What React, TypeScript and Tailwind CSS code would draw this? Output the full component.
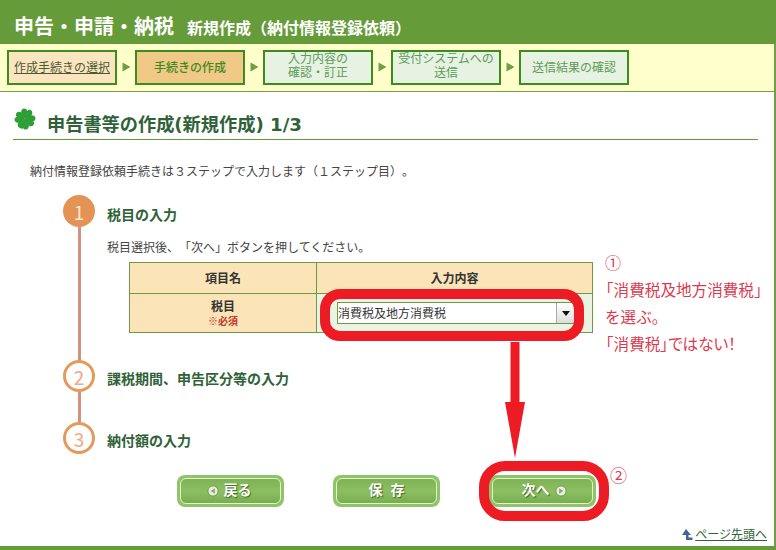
import React from "react";

const font = { fontFamily: '"Noto Sans CJK JP", "Noto Sans", sans-serif' };
const heart = "M11 11C8 8.500 4.500 6.500 5.500 3.200 6.300 0.500 10 0 11 2.800 12 0 15.700 0.500 16.500 3.200 17.500 6.500 14 8.500 11 11Z";

function Clover() {
  return (
    <svg width="22" height="22" viewBox="0 0 22 22" className="shrink-0">
      <g fill="#2e9e36">
        <path d={heart} transform="rotate(15 11 11)" />
        <path d={heart} transform="rotate(105 11 11)" />
        <path d={heart} transform="rotate(195 11 11)" />
        <path d={heart} transform="rotate(285 11 11)" />
        <path d="M10.500 11 Q9.500 16 7 20.500 L8.500 21 Q11 16.500 12 11Z" />
      </g>
    </svg>
  );
}

function StepBox({ children, kind, two }: { children: React.ReactNode; kind: "done" | "active" | "todo"; two?: boolean }) {
  const cls =
    kind === "done"
      ? "bg-[#fbe5c0] text-[#4a5a30] underline"
      : kind === "active"
      ? "bg-[#f0c987] text-[#3f8a20] font-medium"
      : "bg-[#e6f3e2] text-[#5f9a58]";
  return (
    <div className={`w-[110px] h-[35px] border-2 border-[#3d8c1e] flex items-center justify-center text-center text-[12px] leading-[14px] ${two ? "pb-[4px]" : ""} ${cls}`}>
      <span>{children}</span>
    </div>
  );
}

function Sep() {
  return (
    <div className="w-[18px] flex justify-center">
      <svg width="9" height="10" viewBox="0 0 9 10"><path d="M0.500 0.500 8.500 5 0.500 9.500Z" fill="#6f9f3e" /></svg>
    </div>
  );
}

function Circle({ n, filled }: { n: number; filled?: boolean }) {
  return (
    <div
      className={`w-[32px] h-[32px] rounded-full flex items-center justify-center text-[19px] leading-none ${
        filled ? "bg-[#e39455] text-[#fbe7d3]" : "bg-white border-[3px] border-[#e39a5c] text-[#f0a888]"
      }`}
    >
      {n}
    </div>
  );
}

function Btn({ children, shift }: { children: React.ReactNode; shift?: string }) {
  return (
    <div className="w-[107px] h-[32px] rounded-[8px] bg-[#8fc46a] p-[3px]">
      <div className={`w-full h-full rounded-[6px] border border-[#e4f2c9] bg-gradient-to-b from-[#7fb255] via-[#8cbf62] to-[#78ae50] flex items-center justify-center gap-[5px] pb-[3px] text-white font-bold text-[14px] [text-shadow:1px_1px_1px_#3f6a25] ${shift ?? ""}`}>
        {children}
      </div>
    </div>
  );
}

function RoundIcon({ dir }: { dir: "l" | "r" }) {
  return (
    <svg width="12" height="12" viewBox="0 0 13 13" className="mt-[2px]">
      <circle cx="6.500" cy="6.500" r="5.500" fill="#e8f0dc" stroke="#6d9a50" strokeWidth="1" />
      <path d={dir === "l" ? "M8.500 3.500 4 6.500 8.500 9.500Z" : "M4.500 3.500 9 6.500 4.500 9.500Z"} fill="#86a872" />
    </svg>
  );
}

export default function App() {
  return (
    <div style={font} className="relative w-[776px] h-[550px] overflow-hidden bg-white flex flex-col text-[#444] [text-spacing-trim:space-all]">
      <header className="h-[44px] bg-[#659b38] shrink-0 flex items-end pl-[14px] pb-[5px] text-white font-bold gap-[13px]">
        <span className="text-[20px] leading-[26px]">申告・申請・納税</span>
        <span className="text-[16px] leading-[24px]">新規作成（納付情報登録依頼）</span>
      </header>

      <nav className="h-[48px] shrink-0 bg-[#ffffcc] border-b border-[#6fa044] border-r-2 border-r-[#6fa044] flex items-center pl-[7px] pb-[1px]">
        <StepBox kind="done">作成手続きの選択</StepBox>
        <Sep />
        <StepBox kind="active">手続きの作成</StepBox>
        <Sep />
        <StepBox kind="todo" two>入力内容の<br />確認・訂正</StepBox>
        <Sep />
        <StepBox kind="todo" two>受付システムへの<br />送信</StepBox>
        <Sep />
        <StepBox kind="todo">送信結果の確認</StepBox>
      </nav>

      <main className="flex-1 border-r-2 border-[#6fa044] flex flex-col pl-[13px] pr-[16px] relative">
        <div className="h-[48px] border-b border-[#5f9a35] flex items-end gap-[11px] pb-[4px] text-[#2f6238]">
          <div className="ml-[1px] mb-[5px]"><Clover /></div>
          <h1 style={{ fontFamily: '"DejaVu Sans", "Noto Sans CJK JP", sans-serif' }} className="text-[18.200px] font-bold leading-[20px]">申告書等の作成(新規作成) 1/3</h1>
        </div>

        <p className="mt-[22px] ml-[17px] text-[12px] leading-[18px]">納付情報登録依頼手続きは３ステップで入力します（１ステップ目）。</p>

        <div className="ml-[50px] mt-[15px] flex">
          <div className="w-[32px] flex flex-col items-center shrink-0">
            <Circle n={1} filled />
            <div className="w-[3px] h-[133px] bg-[#d59080]" />
            <Circle n={2} />
            <div className="w-[3px] h-[30px] bg-[#d59080]" />
            <Circle n={3} />
          </div>
          <div className="ml-[12px] flex-1">
            <h2 className="h-[32px] pt-[6px] flex items-center text-[14px] font-bold text-[#2f6238]">税目の入力</h2>
            <p className="mt-[11px] text-[12px] leading-[18px]">税目選択後、「次へ」ボタンを押してください。</p>
            <table className="mt-[6px] ml-[22px] w-[464px] h-[71px] border-collapse text-[#333] text-[12px]">
              <tbody>
                <tr className="h-[31px]">
                  <th className="w-[187px] border border-[#6f9a45] bg-[#fbe5b8] font-bold">項目名</th>
                  <th className="border border-[#6f9a45] bg-[#fbe5b8] font-bold">入力内容</th>
                </tr>
                <tr>
                  <th className="border border-[#6f9a45] bg-[#fbe5b8] font-bold leading-[15px]">
                    <div>税目</div>
                    <div className="text-[10px] text-[#c0392b] leading-[15px]">※必須</div>
                  </th>
                  <td className="border border-[#6f9a45] bg-[#e9f4e2] pl-[20px]">
                    <div className="w-[238px] h-[22px] bg-white border border-[#6f9a45] flex items-center justify-between">
                      <span className="text-[12px] leading-none text-[#333]">消費税及地方消費税</span>
                      <span className="w-[18px] h-full border-l border-[#aaa] bg-gradient-to-b from-[#fff] to-[#ddd] flex items-center justify-center">
                        <svg width="8" height="5" viewBox="0 0 8 5"><path d="M0 0H8L4 5Z" fill="#111" /></svg>
                      </span>
                    </div>
                  </td>
                </tr>
              </tbody>
            </table>
            <h2 className="mt-[29px] h-[32px] flex items-center text-[14px] font-bold text-[#2f6238]">課税期間、申告区分等の入力</h2>
            <h2 className="mt-[30px] h-[32px] flex items-center text-[14px] font-bold text-[#2f6238]">納付額の入力</h2>
          </div>
        </div>

        <div className="mt-[19px] ml-[164px] flex gap-[49px]">
          <Btn shift="pr-[3px]"><RoundIcon dir="l" />戻る</Btn>
          <Btn><span>保</span><span className="ml-[3px]">存</span></Btn>
          <Btn shift="pl-[3px]">次へ<RoundIcon dir="r" /></Btn>
        </div>

        <a className="mt-auto mb-[5px] self-end -mr-[9px] flex items-center gap-[2px] text-[12px] leading-[14px] text-[#2f6238] underline">
          <svg width="12" height="11" viewBox="0 0 12 11"><path d="M5 0 10 6H7.500V8.500H11.500V11H5V6H1Z" fill="#46609e" /></svg>
          ページ先頭へ
        </a>
      </main>

      <div className="h-[4px] shrink-0 bg-[#659b38]" />

      {/* Annotations over the page */}
      <div className="absolute left-[320px] top-[289px] w-[264px] h-[52px] rounded-[20px] border-[10px] border-[#ed1c24]" />
      <svg className="absolute left-[504px] top-[342px]" width="22" height="116" viewBox="0 0 22 116">
        <path d="M6.500 0H15.500V60H21L11 116 1 60H6.500Z" fill="#ed1c24" />
      </svg>
      <div className="absolute left-[479px] top-[461px] w-[130px] h-[60px] rounded-[26px] border-[10px] border-[#ed1c24]" />
      <div className="absolute left-[605px] top-[249px] text-[15.600px] leading-[27px] text-[#dc3a50]">
        <div className="text-[16px]">①</div>
        <div className="-ml-[7px] whitespace-nowrap">「消費税及地方消費税」</div>
        <div>を選ぶ。</div>
        <div className="-ml-[7px] whitespace-nowrap">「消費税<span className="[font-feature-settings:'palt']">」ではない！</span></div>
      </div>
      <div className="absolute left-[610px] top-[463px] text-[17px] leading-[24px] text-[#dc3a50]">②</div>
    </div>
  );
}
